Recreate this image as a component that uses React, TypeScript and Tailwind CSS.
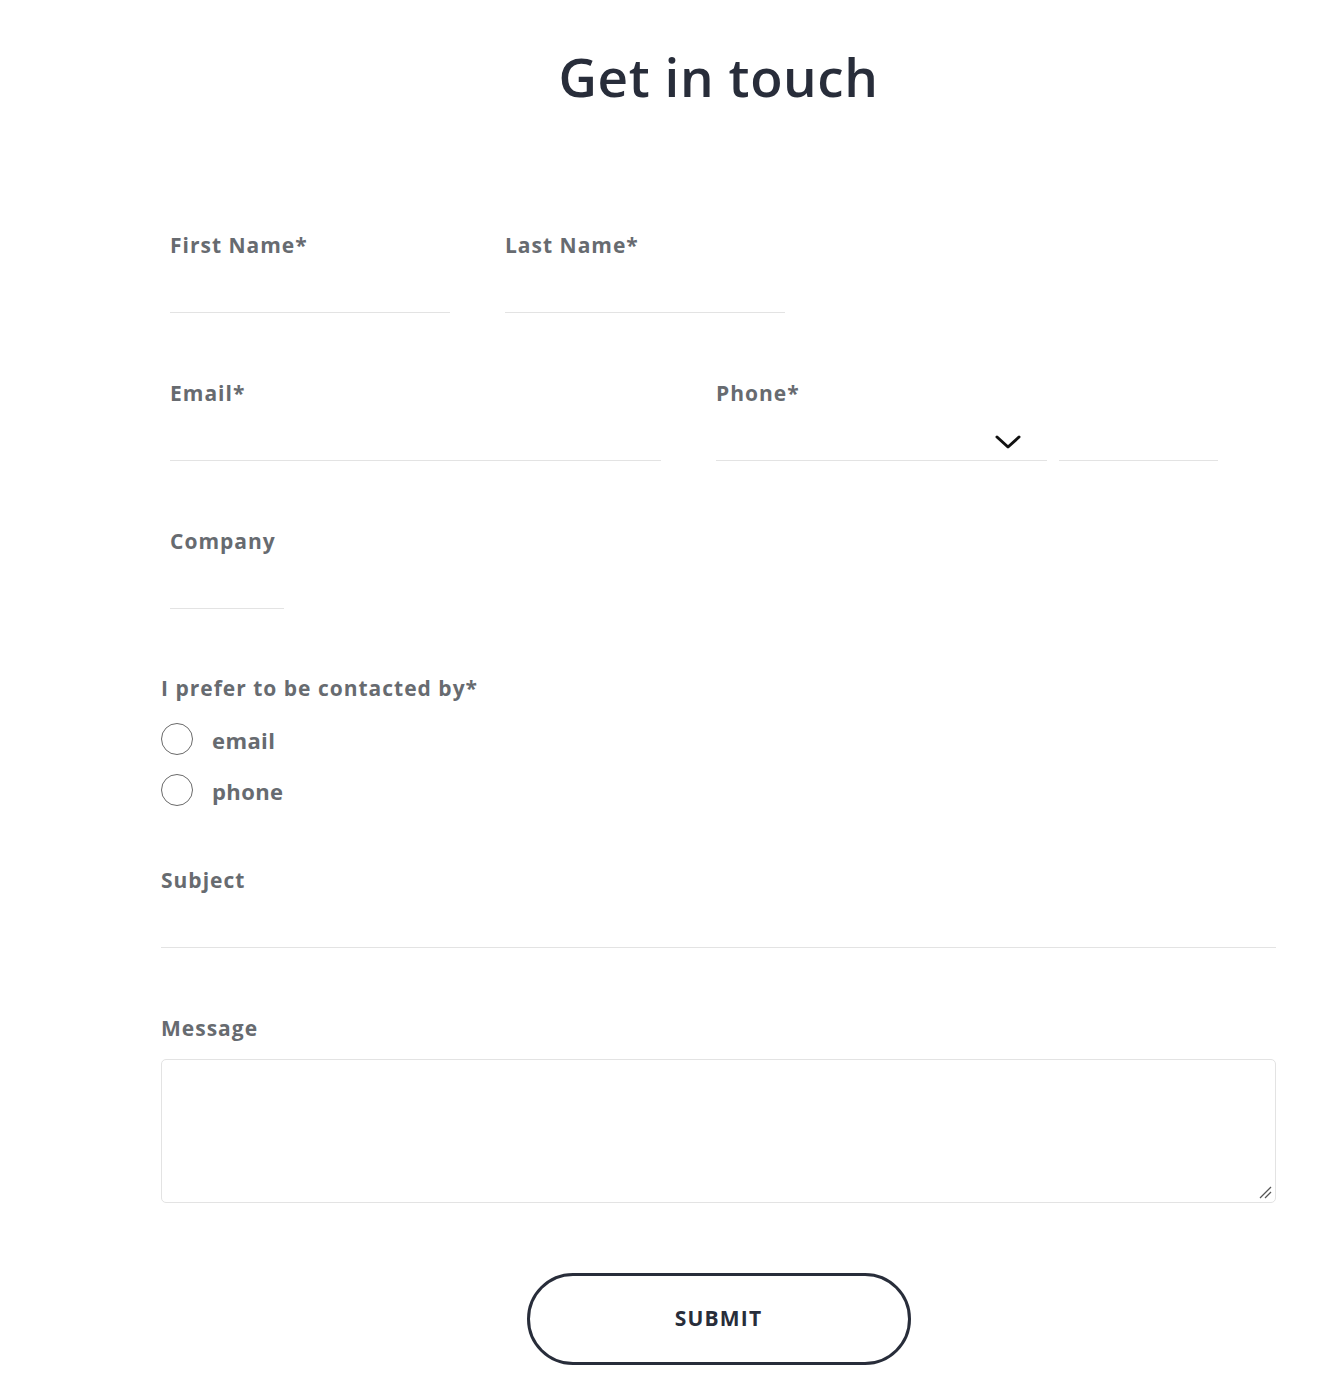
import React from "react";

const labelCls =
  "block h-[24px] leading-[24px] text-[21px] font-bold text-[#676b70] whitespace-nowrap tracking-[1px]";

function Underline({ w }: { w: string }) {
  return <div className={`h-[56px] border-b border-[#e3e3e3] ${w}`} />;
}

export default function App() {
  return (
    <div
      className="w-[1324px] min-h-[1388px] bg-white"
      style={{ fontFamily: '"Open Sans", "Liberation Sans", sans-serif' }}
    >
      <div className="ml-[161px] w-[1115px] pt-[45px] pb-[22px]">
        <h1 className="text-center text-[53px] leading-[64px] font-semibold text-[#282d3a] tracking-[0.6px]">
          Get in touch
        </h1>

        <div className="pl-[9px] mt-[124px]">
          <div className="flex gap-[55px]">
            <div>
              <label className={labelCls}>First Name*</label>
              <Underline w="w-[280px]" />
            </div>
            <div>
              <label className={labelCls}>Last Name*</label>
              <Underline w="w-[280px]" />
            </div>
          </div>

          <div className="flex gap-[55px] mt-[68px]">
            <div>
              <label className={labelCls}>Email*</label>
              <Underline w="w-[491px]" />
            </div>
            <div>
              <label className={labelCls}>Phone*</label>
              <div className="flex gap-[12px]">
                <div className="h-[56px] w-[331px] border-b border-[#e3e3e3] flex items-end justify-end pr-[26px] pb-[10px]">
                  <svg width="26" height="16" viewBox="0 0 26 16" fill="none">
                    <polyline
                      points="2,3 13,13 24,3"
                      stroke="#111"
                      strokeWidth="3"
                      strokeLinecap="round"
                      strokeLinejoin="round"
                    />
                  </svg>
                </div>
                <Underline w="w-[159px]" />
              </div>
            </div>
          </div>

          <div className="mt-[68px]">
            <label className={labelCls}>Company</label>
            <Underline w="w-[114px]" />
          </div>
        </div>

        <div className="mt-[67px]">
          <div className={labelCls}>I prefer to be contacted by*</div>
          <div className="mt-[23px] flex flex-col gap-[19px]">
            {["email", "phone"].map((o) => (
              <label key={o} className="flex items-center h-[32px]">
                <span className="w-[32px] h-[32px] rounded-full border border-[#6a6a6a] box-border" />
                <span className="ml-[19px] pt-[2px] text-[22px] font-bold text-[#676b70] tracking-[0.4px]">
                  {o}
                </span>
              </label>
            ))}
          </div>
        </div>

        <div className="mt-[62px]">
          <label className={labelCls}>Subject</label>
          <Underline w="w-full" />
        </div>

        <div className="mt-[68px]">
          <label className={labelCls}>Message</label>
          <div className="mt-[19px] h-[144px] w-full border border-[#e3e3e3] rounded-[5px] relative">
            <svg
              className="absolute right-[3px] bottom-[3px]"
              width="14"
              height="14"
              viewBox="0 0 14 14"
              fill="none"
            >
              <line x1="2" y1="13" x2="13" y2="2" stroke="#555" strokeWidth="1.3" />
              <line x1="7" y1="13" x2="13" y2="7" stroke="#555" strokeWidth="1.3" />
            </svg>
          </div>
        </div>

        <div className="mt-[70px] flex justify-center">
          <button className="w-[384px] h-[92px] rounded-full border-[3px] border-[#282d3a] text-[21px] font-bold text-[#282d3a] tracking-[1.2px]">
            SUBMIT
          </button>
        </div>
      </div>
    </div>
  );
}
